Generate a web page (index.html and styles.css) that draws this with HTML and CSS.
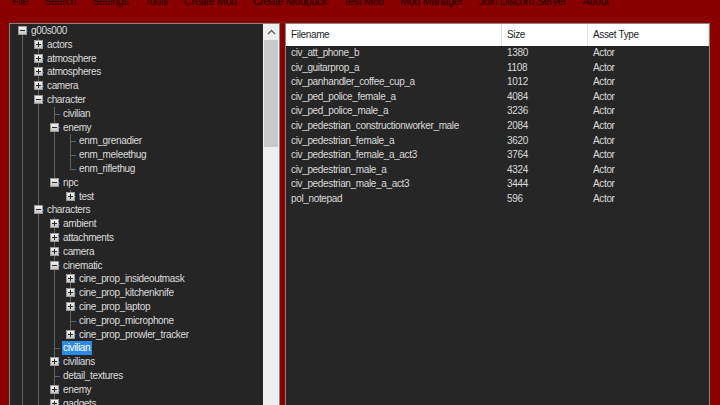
FILE: index.html
```html
<!DOCTYPE html>
<html lang="en">
<head>
    <meta charset="UTF-8">
    <meta name="viewport" content="width=device-width, initial-scale=1.0">
    <title>Mod Tool</title>
    <link rel="stylesheet" href="styles.css">
</head>
<body>
    <div class="menu">
        <span>File</span>
        <span>Search</span>
        <span>Settings</span>
        <span>Tools</span>
        <span>Create Mod</span>
        <span>Create Modpack</span>
        <span>Test Mod</span>
        <span>Mod Manager</span>
        <span>Join Discord Server</span>
        <span>About</span>
    </div>

    <div class="main">
        <div class="tree-panel">
            <div id="tree" class="tree"></div>
            <div class="scrollbar">
                <div class="scroll-btn">
                    <svg width="9" height="6" viewBox="0 0 9 6"><polyline points="1,5 4.5,1.5 8,5" fill="none" stroke="#606060" stroke-width="1.3"/></svg>
                </div>
                <div class="scroll-thumb"></div>
            </div>
        </div>

        <div class="list-panel">
            <div class="list-head">
                <div class="col">Filename</div>
                <div class="col">Size</div>
                <div class="col">Asset Type</div>
            </div>
            <div id="rows"></div>
        </div>
    </div>

    <script>
        const tree = [
            { t: "g00s000", kids: [
                { t: "actors", plus: true },
                { t: "atmosphere", plus: true },
                { t: "atmospheres", plus: true },
                { t: "camera", plus: true },
                { t: "character", kids: [
                    { t: "civilian" },
                    { t: "enemy", kids: [
                        { t: "enm_grenadier" },
                        { t: "enm_meleethug" },
                        { t: "enm_riflethug" }
                    ]},
                    { t: "npc", kids: [
                        { t: "test", plus: true }
                    ]}
                ]},
                { t: "characters", kids: [
                    { t: "ambient", plus: true },
                    { t: "attachments", plus: true },
                    { t: "camera", plus: true },
                    { t: "cinematic", kids: [
                        { t: "cine_prop_insideoutmask", plus: true },
                        { t: "cine_prop_kitchenknife", plus: true },
                        { t: "cine_prop_laptop", plus: true },
                        { t: "cine_prop_microphone" },
                        { t: "cine_prop_prowler_tracker", plus: true }
                    ]},
                    { t: "civilian", selected: true },
                    { t: "civilians", plus: true },
                    { t: "detail_textures" },
                    { t: "enemy", plus: true },
                    { t: "gadgets", plus: true },
                    { t: "props", plus: true }
                ]},
                { t: "vehicles", plus: true }
            ]},
            { t: "g00s001", plus: true }
        ];

        const files = [
            ["civ_att_phone_b", 1380],
            ["civ_guitarprop_a", 1108],
            ["civ_panhandler_coffee_cup_a", 1012],
            ["civ_ped_police_female_a", 4084],
            ["civ_ped_police_male_a", 3236],
            ["civ_pedestrian_constructionworker_male", 2084],
            ["civ_pedestrian_female_a", 3620],
            ["civ_pedestrian_female_a_act3", 3764],
            ["civ_pedestrian_male_a", 4324],
            ["civ_pedestrian_male_a_act3", 3444],
            ["pol_notepad", 596]
        ];

        function renderTree(nodes, guides, root) {
            let list = document.getElementById("tree");
            nodes.forEach((n, i) => {
                let last = i === nodes.length - 1;
                let row = document.createElement("div");
                row.className = "node";
                guides.forEach(g => {
                    let cell = document.createElement("span");
                    cell.className = g ? "guide line" : "guide";
                    row.appendChild(cell);
                });
                let joint = document.createElement("span");
                joint.className = "joint" + (last ? " last" : "") + (root && i === 0 ? " first" : "");
                if (n.kids || n.plus) {
                    joint.innerHTML = `<span class="box ${n.plus ? "plus" : "minus"}"></span>`;
                }
                row.appendChild(joint);
                let label = document.createElement("span");
                label.className = n.selected ? "label selected" : "label";
                label.innerText = n.t;
                row.appendChild(label);
                list.appendChild(row);
                if (n.kids) renderTree(n.kids, guides.concat(!last), false);
            });
        }

        function renderFiles() {
            let rows = document.getElementById("rows");
            files.forEach(f => {
                let item = document.createElement("div");
                item.className = "list-row";
                item.innerHTML = `<div class="col">${f[0]}</div><div class="col">${f[1]}</div><div class="col">Actor</div>`;
                rows.appendChild(item);
            });
        }

        renderTree(tree, [], true);
        renderFiles();
    </script>
</body>
</html>
```

FILE: styles.css
```css
body {
    margin: 0;
    height: 100vh;
    overflow: hidden;
    background-color: #8a0000;
    font-family: "Liberation Sans", Arial, sans-serif;
    font-size: 10px;
    display: flex;
    flex-direction: column;
}
.menu {
    height: 23px;
    flex: none;
    display: flex;
    gap: 16px;
    padding-left: 12px;
    color: #160000;
    font-size: 10.5px;
    letter-spacing: -0.2px;
}
.menu span {
    line-height: 12px;
    margin-top: -5px;
}
.main {
    flex: 1;
    min-height: 0;
    display: flex;
    gap: 5px;
    padding: 0 10px 0 9px;
}
.tree-panel {
    width: 269px;
    display: flex;
    border: 1px solid #858585;
    border-bottom: none;
    background-color: #252525;
}
.tree {
    flex: 1;
    overflow: hidden;
    padding-left: 4px;
    color: #dcdcdc;
    letter-spacing: -0.35px;
}
.node {
    display: flex;
    height: 13.8px;
    line-height: 13.8px;
    white-space: nowrap;
}
.guide,
.joint {
    position: relative;
    flex: none;
    width: 16px;
}
.guide.line::before,
.joint::before {
    content: "";
    position: absolute;
    left: 8px;
    top: 0;
    bottom: 0;
    border-left: 1px solid #626262;
}
.joint.last::before {
    bottom: 50%;
}
.joint.first::before {
    top: 50%;
}
.joint::after {
    content: "";
    position: absolute;
    left: 8px;
    right: 2px;
    top: 50%;
    border-top: 1px solid #626262;
}
.box {
    position: absolute;
    z-index: 1;
    left: 4px;
    top: 2px;
    width: 7px;
    height: 7px;
    border: 1px solid #9a9a9a;
    background: linear-gradient(#f2f2f2, #c6c6c6);
}
.box::before {
    content: "";
    position: absolute;
    left: 1px;
    top: 3px;
    width: 5px;
    height: 1px;
    background-color: #2a2a2a;
}
.box.plus::after {
    content: "";
    position: absolute;
    left: 3px;
    top: 1px;
    width: 1px;
    height: 5px;
    background-color: #2a2a2a;
}
.label {
    padding: 0 2px 0 1px;
}
.label.selected {
    background-color: #2e8ae8;
    color: #ffffff;
}
.scrollbar {
    width: 16px;
    flex: none;
    background-color: #efefef;
}
.scroll-btn {
    height: 16px;
    display: flex;
    align-items: center;
    justify-content: center;
}
.scroll-thumb {
    height: 107px;
    margin: 0 1px;
    background-color: #c9c9c9;
}
.list-panel {
    width: 423px;
    border: 1px solid #858585;
    border-bottom: none;
    background-color: #262626;
    color: #dadada;
    letter-spacing: -0.35px;
}
.list-head,
.list-row {
    display: grid;
    grid-template-columns: 216px 86px 1fr;
}
.list-head {
    height: 22px;
    line-height: 22px;
    background-color: #ffffff;
    color: #1e1e1e;
}
.list-head .col {
    border-right: 1px solid #e4e4e4;
}
.list-row {
    height: 14.6px;
    line-height: 14.6px;
}
.col {
    padding-left: 5px;
    white-space: nowrap;
}
```
